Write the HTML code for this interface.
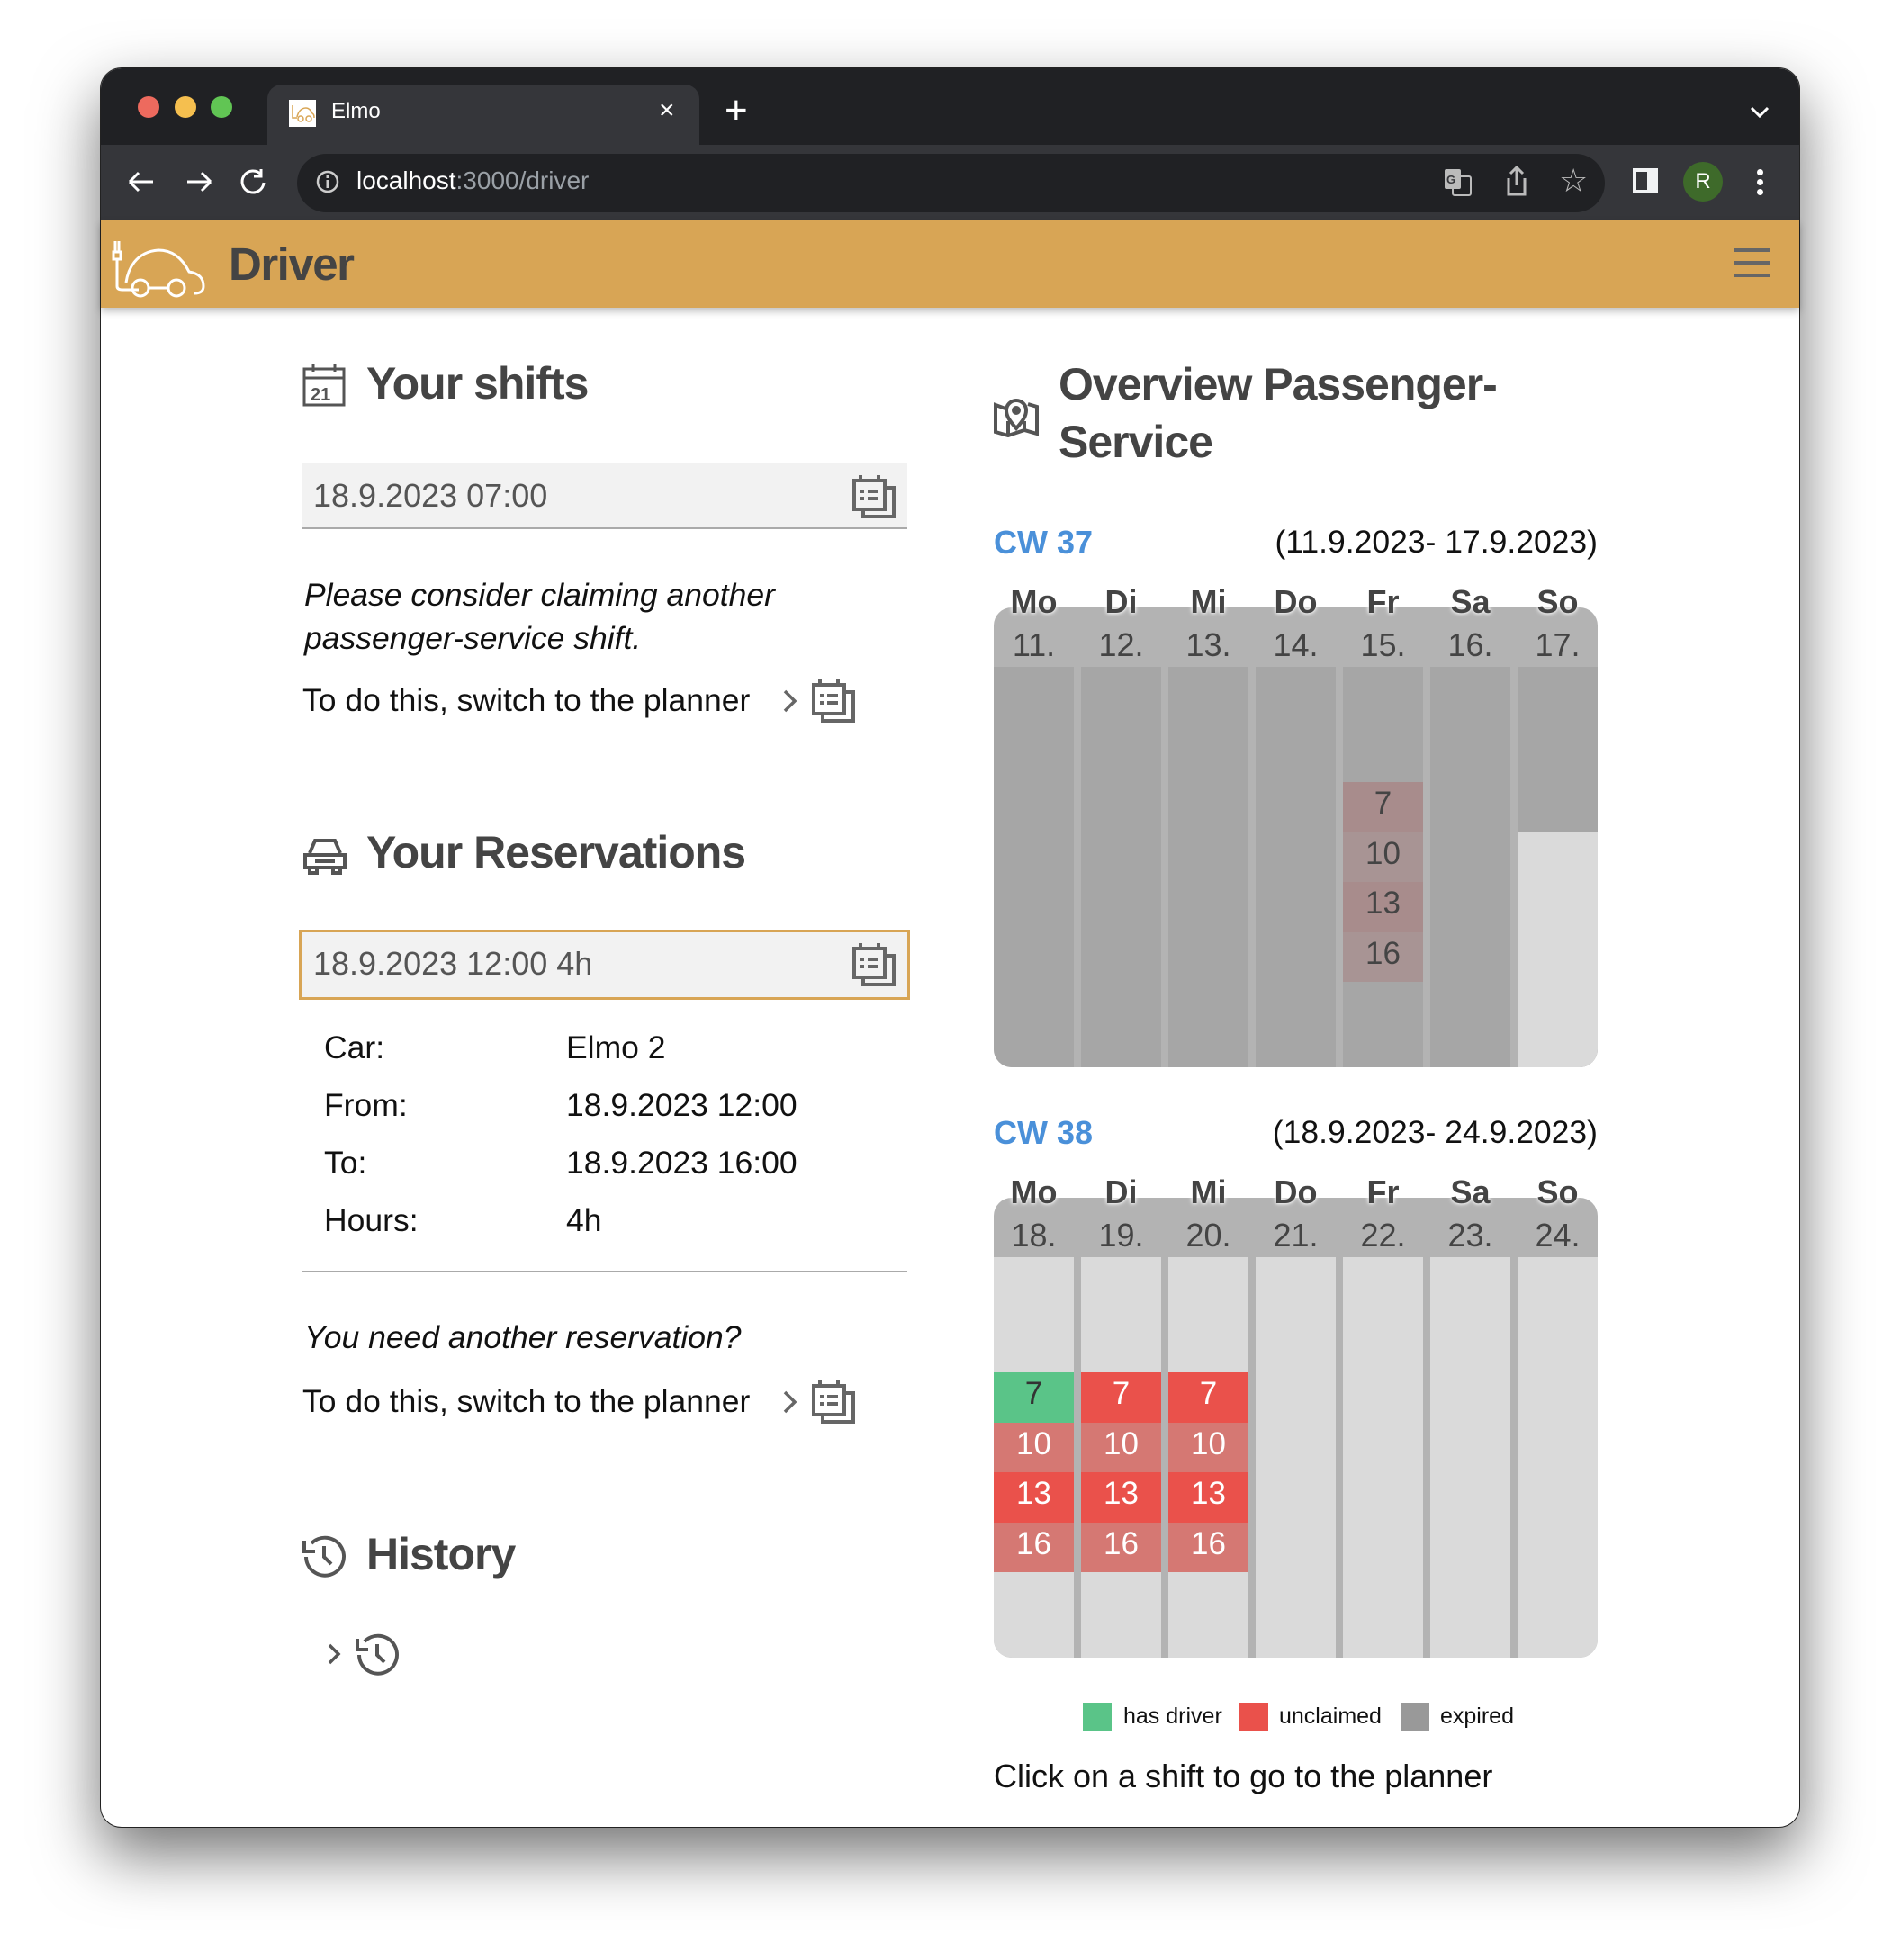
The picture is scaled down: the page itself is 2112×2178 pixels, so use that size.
<!DOCTYPE html>
<html><head><meta charset="utf-8">
<style>
*{margin:0;padding:0;box-sizing:border-box}
body{width:2112px;height:2178px;background:#fff;position:relative;overflow:hidden;font-family:"Liberation Sans",sans-serif}
.a{position:absolute}
.win{left:111px;top:75px;width:1889px;height:1956px;border-radius:24px;overflow:hidden;background:#fff;box-shadow:0 30px 70px rgba(0,0,0,.55);border:1.5px solid #222}
.dot{width:24px;height:24px;border-radius:50%;top:107px}
.h2{font-weight:bold;color:#444;font-size:50px;letter-spacing:-1px}
.txt{font-size:35.5px;color:#111}
.inp{background:#f2f2f2}
.grid{left:1104px;width:671px;height:511px;border-radius:20px;overflow:hidden;background:#b3b3b3}
.col{position:absolute;top:66px;bottom:0;width:89px}
.dn{position:absolute;width:89px;text-align:center;font-weight:bold;font-size:36px;color:#444;text-shadow:0 0 6px #fff,0 0 3px #fff}
.dd{position:absolute;width:89px;text-align:center;font-size:36px;color:#444}
.cell{position:absolute;left:0;width:89px;height:55.5px;text-align:center;font-size:35px;line-height:48px}
</style></head><body>
<div class="a win">
 <div class="a" style="left:0;top:0;width:1889px;height:85px;background:#202124"></div>
 <div class="a" style="left:185px;top:18px;width:480px;height:70px;background:#35363a;border-radius:16px 16px 0 0"></div>
 <div class="a" style="left:0;top:85px;width:1889px;height:85px;background:#35363a"></div>
 <div class="a" style="left:218px;top:95px;width:1453px;height:65px;background:#202124;border-radius:33px"></div>
 <div class="a" style="left:0;top:169px;width:1889px;height:2px;background:#555"></div>
</div>
<div class="a dot" style="left:153px;background:#ed6a5e"></div>
<div class="a dot" style="left:194px;background:#f5bf4f"></div>
<div class="a dot" style="left:234px;background:#61c554"></div>
<div class="a" style="left:321px;top:111px;width:30px;height:30px;background:#fff"></div>
<svg class="a" style="left:322px;top:114px" width="28" height="24" fill="none" stroke="#d8a555" stroke-width="1.5"><path d="M3 3v14h5M8 16c1-5 4-10 10-10 4 0 6 4 7 6 2 1 2 3 2 5"/><circle cx="12" cy="18" r="3"/><circle cx="21" cy="18" r="3"/></svg>
<div class="a" style="left:368px;top:110px;font-size:24px;color:#fff">Elmo</div>
<div class="a" style="left:732px;top:106px;font-size:30px;color:#fff">×</div>
<div class="a" style="left:805px;top:98px;font-size:44px;color:#fff">+</div>
<svg class="a" style="left:1940px;top:115px" width="30" height="20"><path d="M6 5l9 9 9-9" stroke="#fff" stroke-width="3" fill="none"/></svg>
<svg class="a" style="left:140px;top:185px" width="160" height="34" fill="none" stroke="#fff" stroke-width="3"><path d="M4 17h26M4 17l10-10M4 17l10 10"/><path d="M68 17h26M94 17l-10-10M94 17l-10 10"/><path d="M150 9a12 12 0 1 0 3 9M150 3v8h-8"/></svg>
<svg class="a" style="left:350px;top:188px" width="28" height="28"><circle cx="14" cy="14" r="11" stroke="#ccc" stroke-width="2.5" fill="none"/><rect x="12.5" y="12" width="3" height="9" fill="#ccc"/><rect x="12.5" y="7" width="3" height="3" fill="#ccc"/></svg>
<div class="a" style="left:396px;top:185px;font-size:28px;color:#fff">localhost<span style="color:#9aa0a6">:3000/driver</span></div>
<svg class="a" style="left:1604px;top:187px" width="32" height="32"><rect x="1" y="1" width="18" height="22" rx="2" fill="#bbb"/><rect x="10" y="9" width="20" height="21" rx="2" fill="none" stroke="#bbb" stroke-width="2"/><text x="3" y="17" font-size="13" font-weight="bold" fill="#35363a" font-family="Liberation Sans">G</text></svg>
<svg class="a" style="left:1670px;top:182px" width="30" height="40" fill="none" stroke="#bbb" stroke-width="3"><path d="M6 16v18h18V16M15 4v20M8 11l7-7 7 7"/></svg>
<div class="a" style="left:1732px;top:180px;font-size:36px;color:#bbb">☆</div>
<div class="a" style="left:1814px;top:187px;width:28px;height:28px;background:#f1f3f4"></div>
<div class="a" style="left:1818px;top:191px;width:12px;height:20px;background:#35363a"></div>
<div class="a" style="left:1870px;top:180px;width:44px;height:44px;border-radius:50%;background:#3e6a2a;color:#fff;font-size:24px;text-align:center;line-height:44px">R</div>
<div class="a" style="left:1952px;top:188px;width:7px;height:7px;border-radius:50%;background:#fff;box-shadow:0 11px 0 #fff,0 22px 0 #fff"></div>
<!-- header -->
<div class="a" style="left:112px;top:245px;width:1887px;height:97px;background:#d8a555;box-shadow:0 4px 8px rgba(0,0,0,.25)"></div>
<svg class="a" style="left:118px;top:262px" width="110" height="70" fill="none" stroke="#fff" stroke-width="3"><path d="M10 6v12M14 6v12M8 18h8v8h-8zM12 26v30q0 4 6 4h18"/><path d="M22 52c2-14 10-34 36-36 18 0 28 12 34 24 12 2 16 8 16 16 0 6-4 8-10 8M46 58h24"/><circle cx="38" cy="58" r="9"/><circle cx="78" cy="58" r="9"/></svg>
<div class="a" style="left:254px;top:264px;font-size:51px;font-weight:bold;color:#444;letter-spacing:-1.5px">Driver</div>
<div class="a" style="left:1926px;top:276px;width:40px;height:4px;background:#666;box-shadow:0 14px 0 #666,0 28px 0 #666"></div>
<!-- left -->
<svg class="a" style="left:336px;top:404px" width="48" height="48" fill="none" stroke="#555" stroke-width="3"><rect x="2" y="6" width="44" height="40"/><path d="M2 16h44M12 1v8M36 1v8"/><text x="9" y="41" font-size="20" font-weight="bold" fill="#555" stroke="none" font-family="Liberation Sans">21</text></svg>
<div class="a h2" style="left:407px;top:397px">Your shifts</div>
<div class="a inp" style="left:336px;top:515px;width:672px;height:73px;border-bottom:2px solid #aaa"></div>
<div class="a" style="left:348px;top:530px;font-size:36px;color:#555">18.9.2023 07:00</div>
<svg class="a cal" style="left:946px;top:526px" width="50" height="50" fill="none" stroke="#666" stroke-width="4"><path d="M3 8h34v32H3zM10 2v8M30 2v8M37 16h10v32H13v-8M10 20h4M18 20h12M10 28h4M18 28h12"/></svg>
<div class="a" style="left:338px;top:637px;font-size:35.5px;font-style:italic;color:#111;line-height:48px">Please consider claiming another<br>passenger-service shift.</div>
<div class="a txt" style="left:336px;top:758px">To do this, switch to the planner</div>
<svg class="a" style="left:868px;top:764px" width="20" height="30"><path d="M4 4l11 11-11 11" stroke="#666" stroke-width="3.5" fill="none"/></svg>
<svg class="a" style="left:901px;top:753px" width="50" height="50" fill="none" stroke="#666" stroke-width="4"><path d="M3 8h34v32H3zM10 2v8M30 2v8M37 16h10v32H13v-8M10 20h4M18 20h12M10 28h4M18 28h12"/></svg>
<svg class="a" style="left:336px;top:928px" width="50" height="44" fill="none" stroke="#555" stroke-width="4"><path d="M8 20l6-14h22l6 14M3 22h44v14H3zM8 36v6h8v-6M34 36v6h8v-6M14 29h22"/></svg>
<div class="a h2" style="left:407px;top:918px">Your Reservations</div>
<div class="a inp" style="left:332px;top:1033px;width:679px;height:78px;border:3px solid #d8a555"></div>
<div class="a" style="left:348px;top:1050px;font-size:36px;color:#555">18.9.2023 12:00 4h</div>
<svg class="a" style="left:946px;top:1046px" width="50" height="50" fill="none" stroke="#666" stroke-width="4"><path d="M3 8h34v32H3zM10 2v8M30 2v8M37 16h10v32H13v-8M10 20h4M18 20h12M10 28h4M18 28h12"/></svg>
<div class="a txt" style="left:360px;top:1132px;line-height:64px">Car:<br>From:<br>To:<br>Hours:</div>
<div class="a txt" style="left:629px;top:1132px;line-height:64px">Elmo 2<br>18.9.2023 12:00<br>18.9.2023 16:00<br>4h</div>
<div class="a" style="left:336px;top:1412px;width:672px;height:2px;background:#aaa"></div>
<div class="a" style="left:338px;top:1466px;font-size:35.5px;font-style:italic;color:#111">You need another reservation?</div>
<div class="a txt" style="left:336px;top:1537px">To do this, switch to the planner</div>
<svg class="a" style="left:868px;top:1543px" width="20" height="30"><path d="M4 4l11 11-11 11" stroke="#666" stroke-width="3.5" fill="none"/></svg>
<svg class="a" style="left:901px;top:1532px" width="50" height="50" fill="none" stroke="#666" stroke-width="4"><path d="M3 8h34v32H3zM10 2v8M30 2v8M37 16h10v32H13v-8M10 20h4M18 20h12M10 28h4M18 28h12"/></svg>
<svg class="a" style="left:334px;top:1704px" width="52" height="50" fill="none" stroke="#555" stroke-width="4"><path d="M6 26a21 21 0 1 0 6-15M4 8v12h12"/><path d="M26 14v12l8 8"/></svg>
<div class="a h2" style="left:407px;top:1698px">History</div>
<svg class="a" style="left:362px;top:1824px" width="20" height="30"><path d="M4 4l10 10-10 10" stroke="#555" stroke-width="3.5" fill="none"/></svg>
<svg class="a" style="left:393px;top:1813px" width="52" height="50" fill="none" stroke="#555" stroke-width="4"><path d="M6 26a21 21 0 1 0 6-15M4 8v12h12"/><path d="M26 14v12l8 8"/></svg>
<!-- right -->
<svg class="a" style="left:1103px;top:438px" width="52" height="48" fill="none" stroke="#555" stroke-width="4"><path d="M14 16L3 12v30l14 4 18-6 14 4V14l-10-3M17 46V30M35 40V30"/><path d="M26 38c-8-9-11-14-11-20a11 11 0 0 1 22 0c0 6-3 11-11 20z"/><circle cx="26" cy="18" r="3" fill="#555"/></svg>
<div class="a h2" style="left:1176px;top:395px;line-height:64px">Overview Passenger-<br>Service</div>
<div class="a" style="left:1104px;top:582px;font-size:36px;font-weight:bold;color:#4a90d9">CW 37</div>
<div class="a" style="left:1380px;top:582px;width:395px;text-align:right;font-size:35.5px;color:#111">(11.9.2023- 17.9.2023)</div>
<div class="a grid" style="top:675px">
 <div class="col" style="left:0;background:#a6a6a6"></div>
 <div class="col" style="left:97px;background:#a6a6a6"></div>
 <div class="col" style="left:194px;background:#a6a6a6"></div>
 <div class="col" style="left:291px;background:#a6a6a6"></div>
 <div class="col" style="left:388px;background:#a6a6a6">
  <div class="cell" style="top:128px;background:#a88c8c;color:#444">7</div>
  <div class="cell" style="top:183.5px;background:#a89494;color:#444">10</div>
  <div class="cell" style="top:239px;background:#a88c8c;color:#444">13</div>
  <div class="cell" style="top:294.5px;background:#a89494;color:#444">16</div>
 </div>
 <div class="col" style="left:485px;background:#a6a6a6"></div>
 <div class="col" style="left:582px;width:89px;background:#a6a6a6"><div class="a" style="left:0;top:183px;width:89px;bottom:0;background:#dadada"></div></div>
</div>
<div class="a" style="left:1104px;top:648px;width:671px;height:120px">
 <div class="dn" style="left:0">Mo</div><div class="dn" style="left:97px">Di</div><div class="dn" style="left:194px">Mi</div><div class="dn" style="left:291px">Do</div><div class="dn" style="left:388px">Fr</div><div class="dn" style="left:485px">Sa</div><div class="dn" style="left:582px">So</div>
 <div class="dd" style="left:0;top:48px">11.</div><div class="dd" style="left:97px;top:48px">12.</div><div class="dd" style="left:194px;top:48px">13.</div><div class="dd" style="left:291px;top:48px">14.</div><div class="dd" style="left:388px;top:48px">15.</div><div class="dd" style="left:485px;top:48px">16.</div><div class="dd" style="left:582px;top:48px">17.</div>
</div>
<div class="a" style="left:1104px;top:1238px;font-size:36px;font-weight:bold;color:#4a90d9">CW 38</div>
<div class="a" style="left:1380px;top:1238px;width:395px;text-align:right;font-size:35.5px;color:#111">(18.9.2023- 24.9.2023)</div>
<div class="a grid" style="top:1331px">
 <div class="col" style="left:0;background:#dadada">
  <div class="cell" style="top:128px;background:#5ac488;color:#333">7</div>
  <div class="cell" style="top:183.5px;background:#d57873;color:#fff">10</div>
  <div class="cell" style="top:239px;background:#ea514b;color:#fff">13</div>
  <div class="cell" style="top:294.5px;background:#d57873;color:#fff">16</div>
 </div>
 <div class="col" style="left:97px;background:#dadada">
  <div class="cell" style="top:128px;background:#ea514b;color:#fff">7</div>
  <div class="cell" style="top:183.5px;background:#d57873;color:#fff">10</div>
  <div class="cell" style="top:239px;background:#ea514b;color:#fff">13</div>
  <div class="cell" style="top:294.5px;background:#d57873;color:#fff">16</div>
 </div>
 <div class="col" style="left:194px;background:#dadada">
  <div class="cell" style="top:128px;background:#ea514b;color:#fff">7</div>
  <div class="cell" style="top:183.5px;background:#d57873;color:#fff">10</div>
  <div class="cell" style="top:239px;background:#ea514b;color:#fff">13</div>
  <div class="cell" style="top:294.5px;background:#d57873;color:#fff">16</div>
 </div>
 <div class="col" style="left:291px;background:#dadada"></div>
 <div class="col" style="left:388px;background:#dadada"></div>
 <div class="col" style="left:485px;background:#dadada"></div>
 <div class="col" style="left:582px;background:#dadada"></div>
</div>
<div class="a" style="left:1104px;top:1304px;width:671px;height:120px">
 <div class="dn" style="left:0">Mo</div><div class="dn" style="left:97px">Di</div><div class="dn" style="left:194px">Mi</div><div class="dn" style="left:291px">Do</div><div class="dn" style="left:388px">Fr</div><div class="dn" style="left:485px">Sa</div><div class="dn" style="left:582px">So</div>
 <div class="dd" style="left:0;top:48px">18.</div><div class="dd" style="left:97px;top:48px">19.</div><div class="dd" style="left:194px;top:48px">20.</div><div class="dd" style="left:291px;top:48px">21.</div><div class="dd" style="left:388px;top:48px">22.</div><div class="dd" style="left:485px;top:48px">23.</div><div class="dd" style="left:582px;top:48px">24.</div>
</div>
<div class="a" style="left:1203px;top:1892px;width:32px;height:32px;background:#5ac488"></div>
<div class="a" style="left:1248px;top:1893px;font-size:25px;color:#111">has driver</div>
<div class="a" style="left:1377px;top:1892px;width:32px;height:32px;background:#ea514b"></div>
<div class="a" style="left:1421px;top:1893px;font-size:25px;color:#111">unclaimed</div>
<div class="a" style="left:1556px;top:1892px;width:32px;height:32px;background:#999"></div>
<div class="a" style="left:1600px;top:1893px;font-size:25px;color:#111">expired</div>
<div class="a" style="left:1104px;top:1953px;font-size:36px;color:#111">Click on a shift to go to the planner</div>
</body></html>
